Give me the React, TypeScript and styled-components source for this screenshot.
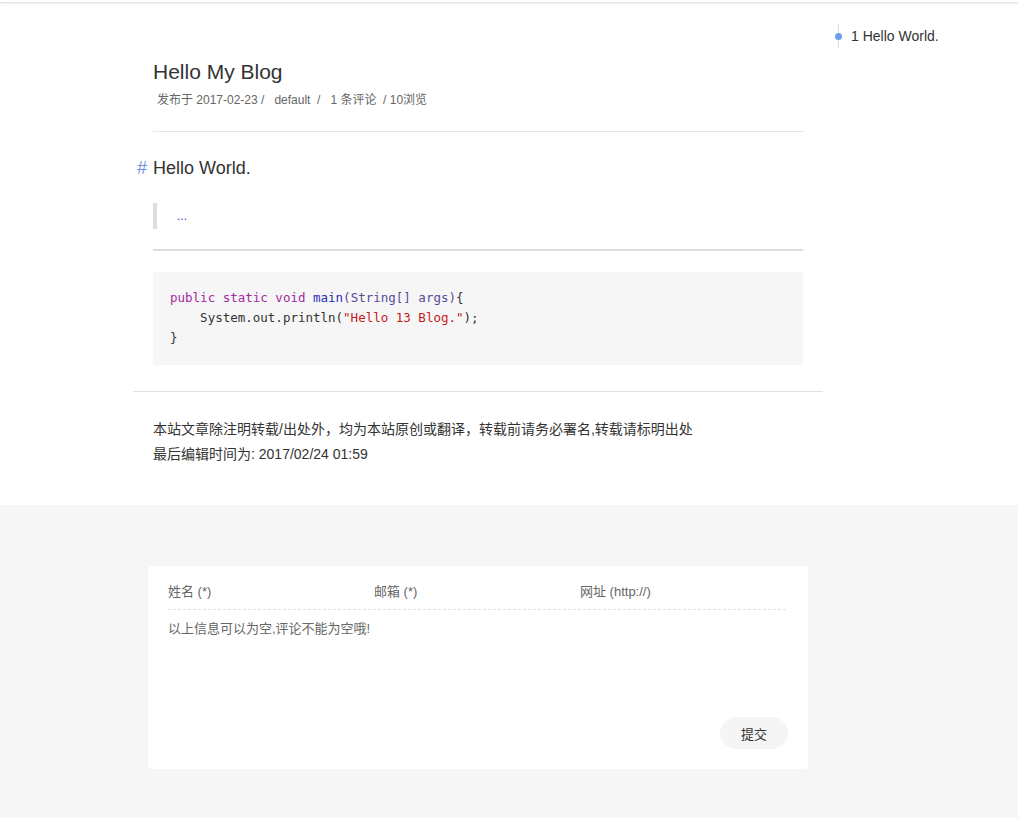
import React from "react";
import styled, { createGlobalStyle } from "styled-components";

const GlobalStyle = createGlobalStyle`
  html, body { margin: 0; padding: 0; }
  body {
    font-family: "Liberation Sans", Arial, "Noto Sans CJK SC", sans-serif;
    color: #333;
    background: #f6f6f6;
  }
  * { box-sizing: border-box; }
`;

const Header = styled.div`
  height: 3px;
  background: #fff;
  border-bottom: 1px solid #e6e6e6;
  box-shadow: 0 1px 3px rgba(0, 0, 0, 0.08);
  position: relative;
  z-index: 2;
`;

const MainSection = styled.section`
  background: #fff;
  display: grid;
  grid-template-columns: 133px 690px 1fr;
  padding-bottom: 38px;
`;

const Article = styled.article`
  grid-column: 2;
  padding-top: 57px;
`;

const Inner = styled.div`
  padding: 0 20px;
`;

const Title = styled.h2`
  margin: 0;
  font-size: 21px;
  font-weight: normal;
  line-height: 24px;
  color: #333;
`;

const Meta = styled.div`
  margin-top: 7px;
  padding-left: 4px;
  font-size: 12px;
  line-height: 18px;
  color: #666;
  white-space: pre;
`;

const Rule = styled.hr<{ $thick?: boolean; $color?: string }>`
  border: 0;
  margin: 0;
  height: ${(p) => (p.$thick ? 2 : 1)}px;
  background: ${(p) => p.$color ?? "#e5e5e5"};
`;

const HeadingRow = styled.h1`
  position: relative;
  margin: 24px 0 0;
  font-size: 18px;
  font-weight: normal;
  line-height: 24px;
  color: #333;
`;

const Hash = styled.span`
  position: absolute;
  left: -16px;
  top: 0;
  color: #6d8fe0;
`;

const Quote = styled.blockquote`
  margin: 23px 0 20px;
  height: 26px;
  border-left: 4px solid #dddddd;
  padding: 0 0 0 20px;
  font-size: 12px;
  line-height: 26px;
  color: #1f3fcf;
`;

const CodeBlock = styled.pre`
  margin: 21px 0 26px;
  background: #f6f6f6;
  border-radius: 3px;
  padding: 16px 17px 17px;
  font-family: "DejaVu Sans Mono", "Liberation Mono", monospace;
  font-size: 12.5px;
  line-height: 20px;
  color: #333;
`;

const Tok = styled.span<{ $c: string }>`
  color: ${(p) => p.$c};
`;

const Copyright = styled.div`
  padding: 25px 20px 0;
  font-size: 14px;
  line-height: 25px;
  color: #333;
`;

const Toc = styled.nav`
  position: absolute;
  left: 838px;
  top: 24px;
  height: 24px;
  border-left: 1px solid #dcdcdc;
  padding-left: 12px;
  font-size: 14px;
  line-height: 24px;
  color: #333;
`;

const TocDot = styled.span`
  position: absolute;
  left: -4px;
  top: 9px;
  width: 7px;
  height: 7px;
  border-radius: 50%;
  background: #6d9eeb;
`;

const CommentSection = styled.section`
  display: grid;
  grid-template-columns: 148px 660px 1fr;
  padding: 61px 0 48px;
`;

const Card = styled.form`
  grid-column: 2;
  background: #fff;
  border-radius: 4px;
  padding: 14px 20px 20px;
  display: flex;
  flex-direction: column;
`;

const InputRow = styled.div`
  display: grid;
  grid-template-columns: repeat(3, 1fr);
  margin-right: 2px;
  border-bottom: 1px dashed #e0e0e0;
`;

const Field = styled.input`
  border: 0;
  outline: none;
  height: 29px;
  padding: 0 0 6px;
  font-family: "Liberation Sans", Arial, "Noto Sans CJK SC", sans-serif;
  font-size: 13px;
  color: #333;
  background: transparent;
  &::placeholder { color: #666; }
`;

const TextArea = styled.textarea`
  border: 0;
  outline: none;
  resize: none;
  height: 95px;
  padding: 9px 0 0;
  font-family: "Liberation Sans", Arial, "Noto Sans CJK SC", sans-serif;
  font-size: 13px;
  line-height: 20px;
  color: #333;
  &::placeholder { color: #666; }
`;

const Actions = styled.div`
  display: flex;
  justify-content: flex-end;
  margin-top: 12px;
`;

const Submit = styled.button`
  width: 68px;
  height: 32px;
  border: 0;
  border-radius: 16px;
  background: #f5f5f5;
  font-family: "Liberation Sans", Arial, "Noto Sans CJK SC", sans-serif;
  font-size: 13px;
  color: #333;
  cursor: pointer;
`;

export default function App() {
  return (
    <>
      <GlobalStyle />
      <Header />
      <MainSection>
        <Article>
          <Inner>
            <Title>Hello My Blog</Title>
            <Meta>发布于 2017-02-23 /   default  /   1 条评论  / 10浏览</Meta>
            <Rule style={{ marginTop: 22 }} />
            <HeadingRow>
              <Hash>#</Hash>Hello World.
            </HeadingRow>
            <Quote>...</Quote>
            <Rule $thick $color="#dddddd" />
            <CodeBlock>
              <Tok $c="#a12a9f">public static void </Tok>
              <Tok $c="#2b2fb8">main</Tok>
              <Tok $c="#5b4a96">(String[] args)</Tok>
              {"{\n    System.out.println("}
              <Tok $c="#c41a16">"Hello 13 Blog."</Tok>
              {");\n}"}
            </CodeBlock>
          </Inner>
          <Rule $color="#e0e0e0" />
          <Copyright>
            本站文章除注明转载/出处外，均为本站原创或翻译，转载前请务必署名,转载请标明出处
            <br />
            最后编辑时间为: 2017/02/24 01:59
          </Copyright>
        </Article>
        <Toc>
          <TocDot />1 Hello World.
        </Toc>
      </MainSection>
      <CommentSection>
        <Card onSubmit={(e) => e.preventDefault()}>
          <InputRow>
            <Field placeholder="姓名 (*)" />
            <Field placeholder="邮箱 (*)" />
            <Field placeholder="网址 (http://)" />
          </InputRow>
          <TextArea placeholder="以上信息可以为空,评论不能为空哦!" />
          <Actions>
            <Submit type="submit">提交</Submit>
          </Actions>
        </Card>
      </CommentSection>
    </>
  );
}
